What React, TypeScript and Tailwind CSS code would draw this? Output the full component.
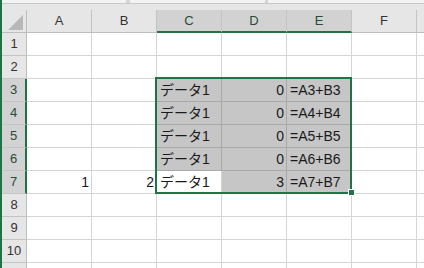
import React from "react";

const COLS = ["A", "B", "C", "D", "E", "F", "G"];
const SEL_COLS = ["C", "D", "E"];

type Cell = { text: string; align: "left" | "right"; gray?: boolean };

const data: Record<number, Record<string, Cell>> = {};
for (let r = 3; r <= 7; r++) {
  data[r] = {
    C: { text: "データ1", align: "left", gray: r !== 7 },
    D: { text: r === 7 ? "3" : "0", align: "right", gray: true },
    E: { text: `=A${r}+B${r}`, align: "left", gray: true },
  };
}
data[7].A = { text: "1", align: "right" };
data[7].B = { text: "2", align: "right" };

function ColHeader({ col }: { col: string }) {
  const sel = SEL_COLS.includes(col);
  return (
    <div
      className={
        "w-[65px] shrink-0 h-[23px] border-r border-[#c4c4c4] flex items-center justify-center text-[13px] " +
        (sel
          ? "bg-[#d2d2d2] border-b-2 border-b-[#217346] text-[#264d36]"
          : "border-b border-b-[#bdbdbd] text-[#333]")
      }
    >
      {/* G is mostly off screen, label not visible */}
      {col === "G" ? "" : col}
    </div>
  );
}

function Row({ r, label = true }: { r: number; label?: boolean }) {
  const sel = r >= 3 && r <= 7;
  return (
    <div className="flex h-[23px] shrink-0">
      <div
        className={
          "w-[25px] shrink-0 border-b border-b-[#c4c4c4] flex items-center justify-center text-[13px] " +
          (sel
            ? "bg-[#d2d2d2] border-r-2 border-r-[#217346] text-[#264d36]"
            : "bg-[#e6e6e6] border-r border-r-[#bdbdbd] text-[#333]")
        }
      >
        {label ? r : ""}
      </div>
      {COLS.map((c) => {
        const cell = data[r]?.[c];
        return (
          <div
            key={c}
            className={
              "w-[65px] shrink-0 border-r border-b flex items-center text-[14px] leading-[22px] text-[#1a1a1a] whitespace-nowrap " +
              (cell?.gray ? "bg-[#c6c6c6] border-[#a9a9a9] " : "border-[#d4d4d4] ") +
              (cell?.align === "right" ? "justify-end pr-[2px]" : "justify-start pl-[3px]")
            }
          >
            {cell?.text}
          </div>
        );
      })}
    </div>
  );
}

export default function App() {
  return (
    <div
      className="relative w-[424px] h-[268px] overflow-hidden bg-white border-l-2 border-[#217346]"
      style={{ fontFamily: '"Liberation Sans", "Noto Sans CJK JP", sans-serif' }}
    >
      {/* formula bar edge */}
      <div className="h-[4px] flex bg-[#d6d6d6] border-b border-[#c8c8c8]">
        <div className="w-[124px] h-[3px] bg-[#f3f3f3]" />
        <div className="w-[4px]" />
        <div className="w-[135px] h-[3px] bg-[#f3f3f3]" />
        <div className="w-[3px]" />
        <div className="flex-1 h-[3px] bg-[#f3f3f3]" />
      </div>

      {/* column headers */}
      <div className="flex items-end h-[29px] bg-[#e6e6e6]">
        <div className="w-[25px] shrink-0 h-[23px] border-r border-b border-[#bdbdbd] flex">
          <svg width="24" height="22" viewBox="0 0 24 22">
            <polygon points="21,5 21,20 6,20" fill="#b8b8b8" />
          </svg>
        </div>
        {COLS.map((c) => (
          <ColHeader key={c} col={c} />
        ))}
      </div>

      {Array.from({ length: 10 }, (_, i) => (
        <Row key={i} r={i + 1} />
      ))}
      {/* row 11 only peeks in at the bottom edge */}
      <Row r={11} label={false} />

      {/* selection frame */}
      <div className="absolute left-[153px] top-[77px] w-[197px] h-[117px] border-2 border-[#217346] pointer-events-none" />
      <div className="absolute left-[346px] top-[189px] w-[7px] h-[7px] bg-[#217346] border border-white" />
    </div>
  );
}
